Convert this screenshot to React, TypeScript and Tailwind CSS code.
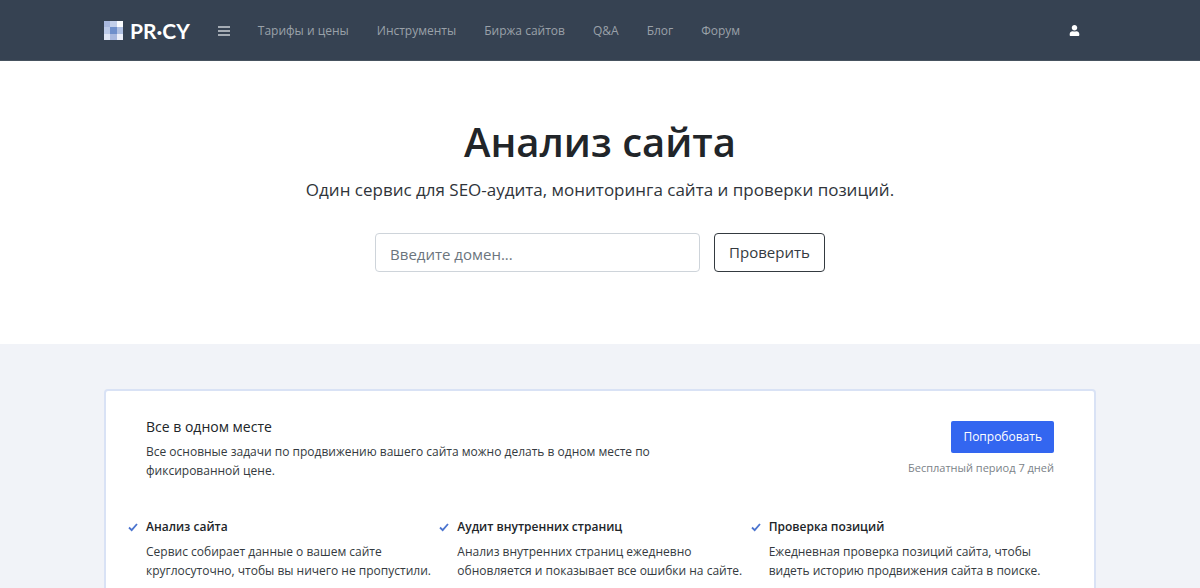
import { FaUser } from 'react-icons/fa'

const NAV_LINKS = ['Тарифы и цены', 'Инструменты', 'Биржа сайтов', 'Q&A', 'Блог', 'Форум']

const FEATURES = [
  {
    title: 'Анализ сайта',
    text: 'Сервис собирает данные о вашем сайте круглосуточно, чтобы вы ничего не пропустили.',
  },
  {
    title: 'Аудит внутренних страниц',
    text: 'Анализ внутренних страниц ежедневно обновляется и показывает все ошибки на сайте.',
  },
  {
    title: 'Проверка позиций',
    text: 'Ежедневная проверка позиций сайта, чтобы видеть историю продвижения сайта в поиске.',
  },
]

// 3x3 mosaic, row by row
const LOGO_CELLS = [
  '#a9b8de', '#c3cfea', '#fafbfe',
  '#bccae8', '#6f8fcb', '#b0c0e2',
  '#dfe5f4', '#a9b8de', '#eceffa',
]

function Logo() {
  return (
    <a href="#" className="flex items-center gap-[7px] text-white">
      <svg width="19" height="19" viewBox="0 0 3 3" shapeRendering="crispEdges" aria-hidden="true">
        {LOGO_CELLS.map((color, i) => (
          <rect key={i} x={i % 3} y={Math.floor(i / 3)} width="1" height="1" fill={color} />
        ))}
      </svg>
      <span className="font-[Lato,sans-serif] text-[21px] leading-5 font-bold">PR·CY</span>
    </a>
  )
}

function Header() {
  return (
    <header className="border-b border-[#46525f] bg-[#364252]">
      <div className="mx-auto flex h-15 max-w-[992px] items-center pt-px">
        <Logo />
        <button type="button" aria-label="Меню" className="ml-7 text-[#a5acb4]">
          <svg width="12" height="12" viewBox="0 0 12 12" fill="currentColor" aria-hidden="true">
            <rect y="1" width="12" height="2" />
            <rect y="5" width="12" height="2" />
            <rect y="9" width="12" height="2" />
          </svg>
        </button>
        <nav className="ml-7 flex gap-7 text-xs text-[#9aa1a9]">
          {NAV_LINKS.map(link => (
            <a key={link} href="#" className="whitespace-nowrap hover:text-white">{link}</a>
          ))}
        </nav>
        <a href="#" aria-label="Войти" className="mr-4 ml-auto text-white">
          <FaUser size={11} />
        </a>
      </div>
    </header>
  )
}

function Hero() {
  return (
    <section className="bg-white px-4 pt-[55px] pb-18 text-center">
      <h1 className="text-[40px] leading-[52px] font-semibold">Анализ сайта</h1>
      <p className="mt-2 text-[17px] leading-7 text-[#2f343a]">
        Один сервис для SEO-аудита, мониторинга сайта и проверки позиций.
      </p>
      <form className="mt-7 flex justify-center gap-[14px] pt-px text-[15px]" onSubmit={e => e.preventDefault()}>
        <input
          type="text"
          aria-label="Домен"
          placeholder="Введите домен..."
          className="h-[39px] w-full max-w-[325px] rounded border border-[#ced4da] px-[14px] pt-[2px] placeholder:text-[#6c757d]"
        />
        <button type="submit" className="h-[39px] rounded border border-[#343a40] px-[14px] text-[#343a40]">
          Проверить
        </button>
      </form>
    </section>
  )
}

function Feature({ title, text }: { title: string; text: string }) {
  return (
    <div className="relative">
      <svg
        className="absolute top-[6px] -left-[18px] text-[#4b74cf]"
        width="10"
        height="9"
        viewBox="0 0 10 9"
        fill="none"
        stroke="currentColor"
        strokeWidth="1.8"
        aria-hidden="true"
      >
        <path d="M1 4.5 3.7 7.2 9 1" />
      </svg>
      <h3 className="text-xs leading-5 font-semibold">{title}</h3>
      <p className="mt-[5px] text-xs leading-[19px] text-[#343a40]">{text}</p>
    </div>
  )
}

function Promo() {
  return (
    <section className="bg-[#f1f3f8] py-[45px]">
      <div className="mx-auto max-w-[992px] rounded border-2 border-[#d9e2f5] bg-white px-10 pt-[26px] pb-12">
        <div className="flex items-start justify-between">
          <div className="max-w-[510px]">
            <h2 className="text-sm leading-5 font-medium">Все в одном месте</h2>
            <p className="mt-[5px] text-xs leading-[19px] text-[#343a40]">
              Все основные задачи по продвижению вашего сайта можно делать в одном месте по фиксированной цене.
            </p>
          </div>
          <div className="pt-1 text-right">
            <button type="button" className="h-8 rounded-xs bg-[#3366f0] px-3 text-xs font-medium text-white">
              Попробовать
            </button>
            <p className="mt-1 text-[11px] leading-[22px] text-[#7b8288]">Бесплатный период 7 дней</p>
          </div>
        </div>
        <div className="mt-[37px] grid grid-cols-3 gap-[26px]">
          {FEATURES.map(feature => (
            <Feature key={feature.title} {...feature} />
          ))}
        </div>
      </div>
    </section>
  )
}

export default function App() {
  return (
    <div className="min-h-screen bg-[#f1f3f8] font-['Open_Sans','Noto_Sans',sans-serif] text-[#212529]">
      <Header />
      <main>
        <Hero />
        <Promo />
      </main>
    </div>
  )
}
